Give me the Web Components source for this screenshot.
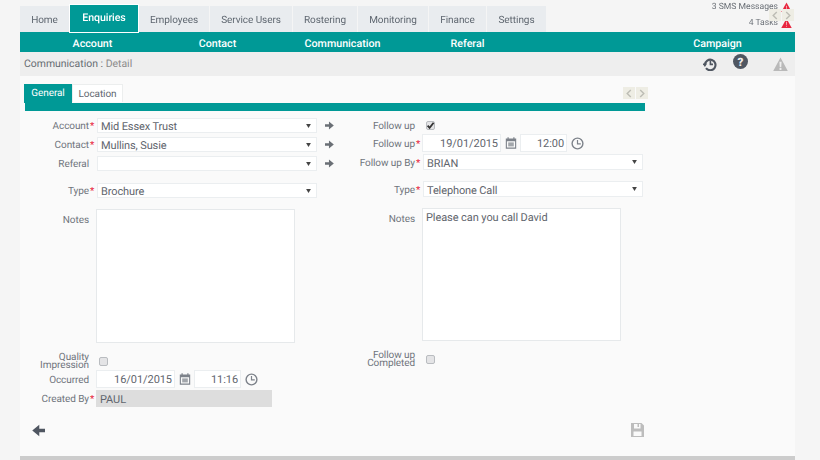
<!DOCTYPE html>
<html lang="en">
<head>
<meta charset="utf-8">
<title>Communication : Detail</title>
<style>
  html, body { margin: 0; height: 460px; overflow: hidden; background: #f5f5f5; }
  body { font-family: Roboto, "Liberation Sans", sans-serif; color: #6f747c; text-rendering: geometricPrecision; }
</style>
</head>
<body>

<rs-shell>
  <rs-main-tabs slot="tabs">
    <rs-alerts slot="alerts"></rs-alerts>
  </rs-main-tabs>
  <rs-sub-nav slot="nav"></rs-sub-nav>
  <rs-title-bar slot="title"></rs-title-bar>

  <rs-form-tabs>
    <rs-form-column>
      <rs-field label="Account" required><rs-select value="Mid Essex Trust" link></rs-select></rs-field>
      <rs-field label="Contact" required style="margin-top:4px"><rs-select value="Mullins, Susie" link></rs-select></rs-field>
      <rs-field label="Referal" style="margin-top:4px"><rs-select link></rs-select></rs-field>
      <rs-field label="Type" required style="margin-top:12px"><rs-select value="Brochure"></rs-select></rs-field>
      <rs-field label="Notes" top style="margin-top:11px"><rs-notes height="134"></rs-notes></rs-field>
      <rs-field label="Quality Impression" tight style="margin-top:9px;height:18px"><rs-check inset="2"></rs-check></rs-field>
      <rs-field label="Occurred"><rs-date-time date="16/01/2015" time="11:16"></rs-date-time></rs-field>
      <rs-field label="Created By" required style="margin-top:2px"><rs-readonly value="PAUL"></rs-readonly></rs-field>
    </rs-form-column>
    <rs-form-column>
      <rs-field label="Follow up" style="height:15px"><rs-check checked inset="3"></rs-check></rs-field>
      <rs-field label="Follow up" required style="margin-top:1px"><rs-date-time date="19/01/2015" time="12:00"></rs-date-time></rs-field>
      <rs-field label="Follow up By" required style="margin-top:2px"><rs-select value="BRIAN" tall></rs-select></rs-field>
      <rs-field label="Type" required style="margin-top:11px"><rs-select value="Telephone Call" tall></rs-select></rs-field>
      <rs-field label="Notes" top style="margin-top:11px"><rs-notes height="133" value="Please can you call David"></rs-notes></rs-field>
      <rs-field label="Follow up Completed" tight style="margin-top:9px;height:18px"><rs-check inset="3"></rs-check></rs-field>
    </rs-form-column>
    <rs-actions slot="actions"></rs-actions>
  </rs-form-tabs>
</rs-shell>

<script>
// small helper, every element below is just a shadow root with a style + markup
function shadow(el, html) {
  el.attachShadow({ mode: 'open' }).innerHTML = html;
}

const TEAL = '#009996';

const ARROW = 'M0 3.6H4.4V.6L9.8 5 4.4 9.4V6.4H0Z';

const ICONS = {
  arrow: `<svg width="9" height="9" viewBox="0 0 10 10"><path fill="currentColor" d="${ARROW}"/></svg>`,
  calendar: '<svg width="12" height="12" viewBox="0 0 12 12"><path fill="#7d828a" d="M.8 1.5H2.5V.3H3.7V1.5H8.3V.3H9.5V1.5H11.2V11.7H.8ZM1.9 4.2V10.6H10.1V4.2Z"/><rect x="3.2" y="5.4" width="5.6" height="4" fill="#a2a6ab"/></svg>',
  clock: '<svg width="13" height="13" viewBox="0 0 13 13" fill="none" stroke="#7d828a"><circle cx="6.5" cy="6.5" r="5.4" stroke-width="1.4"/><path d="M6.5 3V6.8H9.8" stroke-width="1.2"/></svg>',
  caret: '<svg width="5" height="4" viewBox="0 0 6 5"><path fill="#444" d="M0 0H6L3 5Z"/></svg>',
  tick: '<svg width="9" height="9" viewBox="0 0 9 9" fill="none" stroke="#333" stroke-width="1.8"><path d="M1.6 4.6 3.6 6.8 7.6 1.8"/></svg>',
  warn: '<path d="M7 .5 13.8 13H.2ZM6 4.5 6.3 9.5H7.7L8 4.5ZM6.1 10.3V12H7.9V10.3Z" fill-rule="evenodd"/>',
  warnSolid: '<path d="M7 .5 13.8 13H.2Z"/><path fill="#f7a9b3" d="M6.3 5H7.7L7.5 9H6.5ZM6.4 10H7.6V11.4H6.4Z"/>'
};

class RsShell extends HTMLElement {
  constructor() {
    super();
    // the reference is a slightly soft, rescaled capture
    shadow(this, `<style>
      :host { display: flex; flex-direction: column; width: 775px; height: 460px; margin-left: 20px; padding-top: 6px; box-sizing: border-box; filter: blur(.35px); }
      main { flex: 1; background: #fafafa; padding: 8px 0 0 4px; min-height: 0; }
      footer { height: 4px; background: #cccccc; }
    </style>
    <slot name="tabs"></slot><slot name="nav"></slot><slot name="title"></slot>
    <main><slot></slot></main>
    <footer></footer>`);
  }
}

class RsMainTabs extends HTMLElement {
  constructor() {
    super();
    const tabs = [['Home', 49], ['Enquiries', 68], ['Employees', 70], ['Service Users', 82], ['Rostering', 64], ['Monitoring', 70], ['Finance', 57], ['Settings', 59]];
    shadow(this, `<style>
      :host { display: flex; height: 26px; font-size: 10px; letter-spacing: -.06px; position: relative; }
      nav { display: flex; gap: 1px; }
      span { display: flex; align-items: center; justify-content: center; background: #e9ecef; color: #5f6770; box-sizing: border-box; padding-top: 2px; }
      span.on { background: ${TEAL}; color: #fff; font-size: 10.6px; font-weight: 500; height: 27px; margin-top: -1px; padding: 0 0 3px; box-shadow: 0 0 0 1px #fff; }
      ::slotted(*) { margin-left: auto; }
    </style>
    <nav>${tabs.map(([t, w], i) => `<span class="${i === 1 ? 'on' : ''}" style="width:${w}px">${t}</span>`).join('')}</nav>
    <slot name="alerts"></slot>`);
  }
}

class RsPager extends HTMLElement {
  constructor() {
    super();
    const chev = d => `<b><svg width="6" height="9" viewBox="0 0 6 9" fill="none" stroke="#bcbcb4" stroke-width="1.4"><path d="${d}"/></svg></b>`;
    shadow(this, `<style>
      :host { display: flex; gap: 1px; }
      b { display: flex; align-items: center; justify-content: center; width: 12px; height: 12px; background: #eeede4; }
    </style>${chev('M4.8 1 1.2 4.5 4.8 8')}${chev('M1.2 1 4.8 4.5 1.2 8')}`);
  }
}

class RsAlerts extends HTMLElement {
  constructor() {
    super();
    const tri = `<svg width="11" height="10" viewBox="0 0 14 13" fill="#e8263f">${ICONS.warnSolid}</svg>`;
    shadow(this, `<style>
      :host { display: flex; flex-direction: column; align-items: flex-end; font-size: 8.6px; letter-spacing: 0; color: #6a6f76; margin-top: -7px; padding-right: 3px; position: relative; }
      div { display: flex; align-items: center; gap: 3px; height: 16px; }
      rs-pager { position: absolute; top: 10px; right: 1px; }
    </style>
    <div>3 SMS Messages ${tri}</div><div>4 Tasks ${tri}</div><rs-pager></rs-pager>`);
  }
}

class RsSubNav extends HTMLElement {
  constructor() {
    super();
    const items = ['Account', 'Contact', 'Communication', 'Referal', '', 'Campaign'];
    shadow(this, `<style>
      :host { display: grid; grid-template-columns: repeat(6, 125px); height: 20px; padding-left: 10px; background: ${TEAL}; color: #fff; font-size: 10.7px; font-weight: 500; }
      span { display: flex; align-items: center; justify-content: center; padding-top: 2px; box-sizing: border-box; }
    </style>${items.map(t => `<span>${t}</span>`).join('')}`);
  }
}

class RsTitleBar extends HTMLElement {
  constructor() {
    super();
    shadow(this, `<style>
      :host { display: flex; align-items: center; box-sizing: border-box; height: 24px; padding: 0 7px 1px 4px; background: #eeeeee; font-size: 10.45px; color: #666c72; }
      i { font-style: normal; color: #8a8a8a; }
      h1 { all: unset; flex: 1; }
      svg { display: block; }
      .hist { margin: 1px 16px 0 0; }
      .help { margin: -4px 25px 0 0; }
    </style>
    <h1>Communication : <i>Detail</i></h1>
    <svg class="hist" width="14" height="14" viewBox="0 0 14 14" fill="none" stroke="#4f5661" stroke-width="2.1"><path d="M3 11.2A5.3 5.3 0 1 0 1.9 7.6"/><path d="M7.4 3.6V7.4H10" stroke-width="1.6"/><path fill="#4f5661" stroke="none" d="M-.4 6.6H4.2L1.9 10Z"/></svg>
    <svg class="help" width="15" height="15" viewBox="0 0 15 15"><circle cx="7.5" cy="7.5" r="7.5" fill="#4f5661"/><text x="7.5" y="11.6" font-size="11.5" font-weight="900" text-anchor="middle" fill="#eeeeee" font-family="Roboto, sans-serif">?</text></svg>
    <svg width="15" height="14" viewBox="0 0 14 13" fill="#b9b9b9">${ICONS.warn}</svg>`);
  }
}

class RsFormTabs extends HTMLElement {
  constructor() {
    super();
    shadow(this, `<style>
      :host { display: block; width: 621px; font-size: 10px; letter-spacing: -.08px; position: relative; }
      .tabs { display: flex; height: 19px; }
      .tabs span { display: flex; align-items: center; justify-content: center; box-sizing: border-box; }
      .on { width: 48px; background: ${TEAL}; color: #fff; padding-bottom: 1px; }
      .off { width: 51px; height: 18px; background: #fff; color: #5f6770; border: 1px solid #eceeee; border-bottom: 0; padding-top: 1px; }
      .rule { height: 8px; margin-left: 1px; background: ${TEAL}; }
      .form { display: grid; grid-template-columns: 326px 295px; margin-top: 7px; }
      rs-pager { position: absolute; top: 3px; right: -3px; }
    </style>
    <div class="tabs"><span class="on">General</span><span class="off">Location</span></div>
    <rs-pager></rs-pager>
    <div class="rule"></div>
    <div class="form"><slot></slot></div>
    <slot name="actions"></slot>`);
  }
}

class RsFormColumn extends HTMLElement {
  constructor() {
    super();
    shadow(this, `<style>:host { display: flex; flex-direction: column; }</style><slot></slot>`);
  }
}

class RsField extends HTMLElement {
  constructor() {
    super();
    const req = this.hasAttribute('required') ? '*' : '';
    shadow(this, `<style>
      :host { display: flex; align-items: center; }
      :host([top]) { align-items: flex-start; }
      :host([top]) label { margin-top: 4px; }
      label { width: 65px; flex: none; text-align: right; padding-top: 2px; box-sizing: border-box; }
      em { width: 8px; flex: none; font-style: normal; color: #e8263f; align-self: center; padding: 2px 0 0 1px; box-sizing: border-box; }
      :host([tight]) label { line-height: 8px; }
    </style>
    <label>${this.getAttribute('label')}</label><em>${req}</em><slot></slot>`);
  }
}

class RsSelect extends HTMLElement {
  constructor() {
    super();
    shadow(this, `<style>
      :host { display: flex; align-items: center; color: #6a6f75; }
      .box { display: flex; align-items: center; justify-content: space-between; width: 220px; height: 15px; box-sizing: border-box; padding: 2px 5px 0 3px; background: #fff; border: 1px solid #ebeef0; font-size: 11px; letter-spacing: -.12px; color: #5f656d; }
      :host([tall]) .box { height: 16px; }
      svg { display: block; margin-top: -2px; }
      .go svg { margin: 0; }
      .go { margin-left: 8px; display: flex; }
    </style>
    <div class="box"><span>${this.getAttribute('value') || ''}</span>${ICONS.caret}</div>
    ${this.hasAttribute('link') ? `<span class="go">${ICONS.arrow}</span>` : ''}`);
  }
}

class RsDateTime extends HTMLElement {
  constructor() {
    super();
    shadow(this, `<style>
      :host { display: flex; align-items: center; margin-left: -1px; }
      div { height: 18px; box-sizing: border-box; background: #fff; border: 1px solid #ebeef0; font-size: 11px; letter-spacing: -.06px; color: #5f656d; text-align: right; padding-right: 2px; line-height: 18px; }
      .d { width: 79px; }
      .t { width: 47px; }
      svg { display: block; }
      .cal { margin: 0 3px 0 4px; }
      .clk { margin-left: 4px; }
    </style>
    <div class="d">${this.getAttribute('date')}</div><span class="cal">${ICONS.calendar}</span>
    <div class="t">${this.getAttribute('time')}</div><span class="clk">${ICONS.clock}</span>`);
  }
}

class RsNotes extends HTMLElement {
  constructor() {
    super();
    shadow(this, `<style>
      :host { display: block; margin-left: -1px; }
      div { width: 198.5px; box-sizing: border-box; background: #fff; border: 1px solid #e6e9eb; padding: 2px 3px; font-size: 11px; letter-spacing: -.08px; color: #5f656d; }
    </style>
    <div style="height:${this.getAttribute('height')}px">${this.getAttribute('value') || ''}</div>`);
  }
}

class RsCheck extends HTMLElement {
  constructor() {
    super();
    shadow(this, `<style>
      :host { display: flex; align-items: center; margin-left: ${this.getAttribute('inset')}px; }
      span { display: flex; align-items: center; justify-content: center; width: 9px; height: 9px; background: #e4e4e6; border: 1px solid #b9bcc0; border-radius: 2px; box-sizing: border-box; }
      svg { display: block; flex: none; }
    </style><span>${this.hasAttribute('checked') ? ICONS.tick : ''}</span>`);
  }
}

class RsReadonly extends HTMLElement {
  constructor() {
    super();
    shadow(this, `<style>
      :host { display: flex; align-items: center; width: 176px; height: 17px; margin-left: -1px; padding: 2px 0 0 4px; box-sizing: border-box; background: #dddddd; font-size: 11px; color: #5f656d; }
    </style>${this.getAttribute('value')}`);
  }
}

class RsActions extends HTMLElement {
  constructor() {
    super();
    shadow(this, `<style>
      :host { display: flex; justify-content: space-between; align-items: center; height: 14px; margin-top: 16px; padding: 0 1px 0 8px; }
      svg { display: block; }
    </style>
    <svg width="13" height="13" viewBox="0 0 10 10" style="transform:scaleX(-1)"><path fill="#4f5661" d="${ARROW}"/></svg>
    <svg width="13" height="14" viewBox="0 0 13 14"><path fill="#bdbdbd" fill-rule="evenodd" d="M0 0H10.5L13 2.5V14H0ZM3 1V5.5H9.5V1H8V4H6.5V1ZM2.5 8.5V13H10.5V8.5Z"/></svg>`);
  }
}

customElements.define('rs-shell', RsShell);
customElements.define('rs-main-tabs', RsMainTabs);
customElements.define('rs-pager', RsPager);
customElements.define('rs-alerts', RsAlerts);
customElements.define('rs-sub-nav', RsSubNav);
customElements.define('rs-title-bar', RsTitleBar);
customElements.define('rs-form-tabs', RsFormTabs);
customElements.define('rs-form-column', RsFormColumn);
customElements.define('rs-field', RsField);
customElements.define('rs-select', RsSelect);
customElements.define('rs-date-time', RsDateTime);
customElements.define('rs-notes', RsNotes);
customElements.define('rs-check', RsCheck);
customElements.define('rs-readonly', RsReadonly);
customElements.define('rs-actions', RsActions);
</script>
</body>
</html>
